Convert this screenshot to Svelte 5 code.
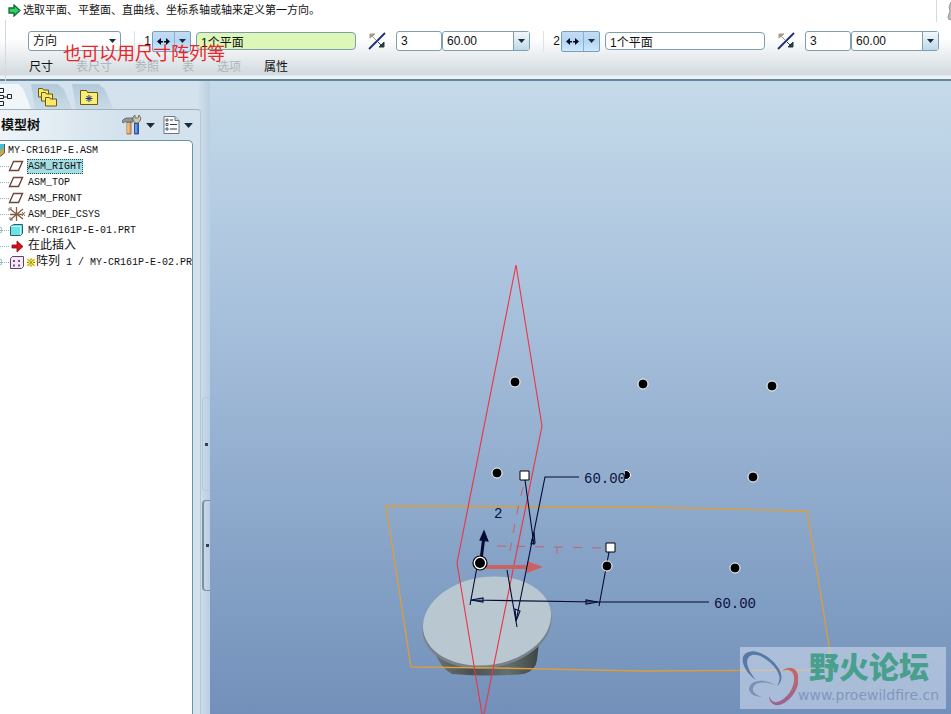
<script lang="ts">
	const groups = [
		{ no: 1, ref: '1个平面', count: '3', step: '60.00', active: true },
		{ no: 2, ref: '1个平面', count: '3', step: '60.00', active: false }
	];

	const tabs = [
		{ label: '尺寸', enabled: true },
		{ label: '表尺寸', enabled: false },
		{ label: '参照', enabled: false },
		{ label: '表', enabled: false },
		{ label: '选项', enabled: false },
		{ label: '属性', enabled: true }
	];

	const nodes = [
		{ icon: 'plane', name: 'ASM_RIGHT', selected: true },
		{ icon: 'plane', name: 'ASM_TOP' },
		{ icon: 'plane', name: 'ASM_FRONT' },
		{ icon: 'csys', name: 'ASM_DEF_CSYS' },
		{ icon: 'part', name: 'MY-CR161P-E-01.PRT' },
		{ icon: 'insert', cjk: '在此插入', name: '' },
		{ icon: 'pattern', cjk: '阵列', name: ' 1 / MY-CR161P-E-02.PRT' }
	];

	const dots = [
		[515, 382],
		[643, 384],
		[772, 386],
		[497, 473],
		[753, 477],
		[607, 566],
		[735, 568]
	];
</script>

{#snippet caret()}
	<svg class="caret" width="7" height="4" viewBox="0 0 7 4"><path d="M0 0h7L3.500 4z" /></svg>
{/snippet}

<div class="app">
	<header>
		<div class="status">
			<svg width="13" height="13" viewBox="0 0 13 13">
				<path d="M1 4h5V1l6 5.500L6 12V9H1z" fill="#2fd264" stroke="#146a35" stroke-width="1.300" />
			</svg>
			<p>选取平面、平整面、直曲线、坐标系轴或轴来定义第一方向。</p>
			<svg class="corner" width="15" height="24" viewBox="0 0 15 24">
				<path d="M.5 0v24" stroke="#d5dade" />
				<path d="M15 4l-2 5 1 4-2 6q0 3 3 3" fill="#bbb" stroke="#999" />
			</svg>
		</div>

		<div class="dash">
			<div class="controls">
				<label class="kind">
					<select aria-label="阵列类型">
						<option>方向</option>
					</select>
					{@render caret()}
				</label>
				{#each groups as g}
					<div class="group">
						<label class="no" for="ref{g.no}">{g.no}</label>
						<div class="split">
							<button aria-label="平移">
								<svg width="13" height="7" viewBox="0 0 13 7">
									<path d="M0 3.500L4 0v7zM13 3.500L9 0v7zM4 3h2v1.500H4zM7 3h2v1.500H7z" fill="#000a20" />
								</svg>
							</button>
							<button aria-label="更多">{@render caret()}</button>
						</div>
						<input id="ref{g.no}" class="ref" class:active={g.active} value={g.ref} />
						<button class="flip" aria-label="反向">
							<svg width="18" height="18" viewBox="0 0 18 18">
								<path d="M1 17L17 1" stroke="#1d2c78" stroke-width="1.800" />
								<path d="M2 2h5L2 6zM4 4l4 4" fill="#a39b84" stroke="#a39b84" />
								<path d="M16 15h-5l5-5zM13 13l-3-3" fill="#2b3a3c" stroke="#2b3a3c" />
							</svg>
						</button>
						<input class="count" aria-label="数量" value={g.count} />
						<div class="combo">
							<input aria-label="间距" value={g.step} />
							<button aria-label="间距列表">{@render caret()}</button>
						</div>
					</div>
				{/each}
			</div>
			<nav>
				{#each tabs as t}
					<button disabled={!t.enabled}>{t.label}</button>
				{/each}
			</nav>
			<p class="note">也可以用尺寸阵列等</p>
		</div>
	</header>

	<main>
		<aside>
			<div class="tabs">
				<button class="current" aria-label="模型树">
					<svg width="13" height="20" viewBox="0 0 13 20" fill="none" stroke="#222">
						<path d="M0 1.500h3.500v4H0M0 8.500h3.500v3H0M0 14.500h3.500v4H0M3 10h4M7.500 7.500h4v4h-4z" />
					</svg>
				</button>
				<button aria-label="文件夹浏览器">
					<svg width="19" height="20" viewBox="0 0 19 20" fill="#fbe96c" stroke="#6a5b14">
						<path d="M.5 1.500h4l1 1.500h5v7H.500z" />
						<path d="M3.500 5.500h4l1 1.500h6v7h-11z" />
						<path d="M7.500 10.500h4l1 1.500h6v7h-11z" />
					</svg>
				</button>
				<button aria-label="收藏夹">
					<svg width="18" height="16" viewBox="0 0 18 16">
						<path d="M.5 1.500h6l1 2h10v12H.500z" fill="#fbee74" stroke="#6a5b14" />
						<path d="M9 6v7M5.500 9.500h7M6.500 7l5 5M11.500 7l-5 5" stroke="#1a2f86" />
					</svg>
				</button>
			</div>

			<section>
				<div class="title">
					<h2>模型树</h2>
					<button aria-label="设置">
						<svg width="20" height="20" viewBox="0 0 20 20">
							<path d="M5 7h4v12H5z" fill="#e8a35c" stroke="#9a6230" stroke-width=".8" />
							<path d="M6 8v10" stroke="#fbdcb0" />
							<path d="M0 6q2-3 5-3h6v4H5Q3 6 1 8z" fill="#8f999e" stroke="#555d62" stroke-width=".8" />
							<path d="M12.500 8h4v11h-4z" fill="#2f6fd0" stroke="#1d3f86" stroke-width=".8" />
							<path d="M14 9v9" stroke="#9cc4f5" />
							<path d="M11 2l2-2v3h3l1-3 2 3-1 3-2 2h-3l-2-3z" fill="#c9c7ac" stroke="#5f5e4d" stroke-width=".8" />
						</svg>
						{@render caret()}
					</button>
					<button aria-label="显示">
						<svg width="17" height="20" viewBox="0 0 17 20">
							<path d="M1 1.500h11l4 4V18.500H1z" fill="#fafcfd" stroke="#6b7784" />
							<path d="M12 1.500v4h4" fill="#cfd8df" stroke="#6b7784" />
							<path d="M7 5h3M7 9.500h7M7 14h7" stroke="#333b45" />
							<path d="M3 4h2v2H3zM3 8.500h2v2H3zM3 13h2v2H3z" fill="none" stroke="#333b45" stroke-width=".8" />
						</svg>
						{@render caret()}
					</button>
				</div>

				<ul>
					<li class="root">
						<svg width="5" height="14" viewBox="0 0 5 14">
							<path d="M0 1h4v9l-4 3z" fill="#48bfd0" />
							<path d="M0 9l4-5v6l-4 3z" fill="#d9a53a" />
							<path d="M4.500 1v9L0 13.500" fill="none" stroke="#4b5e54" />
						</svg>
						<span>MY-CR161P-E.ASM</span>
					</li>
					{#each nodes as n}
						<li>
							<svg width="27" height="16" viewBox="0 0 27 16">
								<path d="M0 8.500h9" stroke="#8fb4bf" stroke-dasharray="1 1" />
								{#if n.icon === 'plane'}
									<path d="M13.500 3.500h9l-4 9h-9z" fill="#fff" stroke="#6e4634" stroke-width="1.400" />
								{:else if n.icon === 'csys'}
									<path d="M16.500 1v14M10 3l13 10M10 14L23 3M10 8.500h13" stroke="#86603c" stroke-width="1.300" />
									<path d="M9 5V2h3M10 11v3h3M22 6l3 4M25 6l-3 4" fill="none" stroke="#77777a" />
								{:else if n.icon === 'part'}
									<path d="M10.500 4.500l3-2h9v9l-2 2h-10z" fill="#6be3e6" stroke="#285f68" />
									<path d="M11 4.500h9.500V13" fill="none" stroke="#bff8f8" />
									<path d="M0 5.500h1.500v5H0" fill="none" stroke="#9fc9c9" />
								{:else if n.icon === 'insert'}
									<path d="M12 7h5V3l6 5.500L17 14v-4h-5z" fill="#d80f16" stroke="#7e0a0e" stroke-width=".8" />
								{:else}
									<path d="M10.500 4.500l2-2h11v10l-2 2h-11z" fill="#f5eafa" stroke="#5e3f66" />
									<path d="M13 6h2v2h-2zM18 6h2v2h-2zM13 10.500h2v2h-2zM18 10.500h2v2h-2z" fill="#7d4c8c" />
									<path d="M0 5.500h1.500v5H0" fill="none" stroke="#9fc9c9" />
								{/if}
							</svg>
							{#if n.icon === 'pattern'}
								<svg width="8" height="9" viewBox="0 0 9 9">
									<path d="M0 0h9v9H0z" fill="#fff36a" />
									<path d="M1 1l7 7M8 1L1 8M4.500 0v2M4.500 7v2M0 4.500h2M7 4.500h2" stroke="#6f6a10" />
								</svg>
							{/if}
							<span class:selected={n.selected}
								>{#if n.cjk}<b>{n.cjk}</b>{/if}{n.name}</span
							>
						</li>
					{/each}
				</ul>
			</section>

			<div class="grips">
				<button aria-label="折叠导航器"></button>
				<button class="pressed" aria-label="展开浏览器"></button>
			</div>
		</aside>

		<div class="view">
			<svg class="scene" viewBox="210 81 741 633" preserveAspectRatio="xMinYMin slice">
				<defs>
					<linearGradient id="base">
						<stop offset="0" stop-color="#6b7373" />
						<stop offset=".35" stop-color="#4b5150" />
						<stop offset=".7" stop-color="#65706e" />
						<stop offset="1" stop-color="#3d4444" />
					</linearGradient>
				</defs>

				<path d="M434 650q6 18 18 24q40 3 72 0q12-4 13-14l2-18z" fill="url(#base)" />
				<ellipse cx="487" cy="624" rx="65" ry="44" transform="rotate(-9 487 624)" fill="#77828a" />
				<ellipse cx="487" cy="621" rx="64.500" ry="44" transform="rotate(-9 487 621)" fill="#b9c7d1" />

				<path class="datum" d="M386 506l254 1 167 4 26 159-192 1-144-3-86-1z" />
				<path class="plane" d="M482 714L457 563 516 265l26 161-58 288" />

				<path class="ghost" d="M497 546l109 2M523 487l-7 30-6 34M557 547v7" />
				<path d="M486 565h41v-4l16 6-16 6v-4h-41z" fill="#cb6262" />

				<g class="dim">
					<path d="M579 477h-34L516 621M525 480l9 65M507 570l10 57" />
					<path d="M477 567l-7 38M609 552l-10 54M471 600l127 2h111" />
					<path d="M534 532l-3 12 4-1zM516 621l-1-12 5 2zM471 600l12-2v4zM598 602l-12-2v4z" />
					<path d="M481 560l3-24" stroke-width="3" />
					<path d="M484 531l4 10-8-1z" fill="#050a35" />
				</g>
				<g class="value">
					<text x="494" y="518">2</text>
					<text x="714" y="608">60.00</text>
				</g>

				<circle class="dot" cx="626" cy="475" r="4.500" />
				<path d="M583 470h42v14h-42z" fill="#92aecf" />
				<text class="value" x="584" y="483">60.00</text>

				{#each dots as [x, y]}
					<circle class="dot" cx={x} cy={y} r="5" />
				{/each}
				<circle cx="480" cy="563" r="7" fill="#fff" stroke="#000" stroke-width="1.200" />
				<circle cx="480" cy="563" r="5" />
				<path d="M520 471h9v9h-9zM606 543h9v9h-9z" fill="#fff" stroke="#000" />
			</svg>

			<div class="watermark">
				<svg width="56" height="58" viewBox="0 0 56 58">
					<defs>
						<linearGradient id="flame" x2="0" y2="1">
							<stop offset="0" stop-color="#c9695f" />
							<stop offset="1" stop-color="#9a6295" />
						</linearGradient>
					</defs>
					<path
						d="M14 31C3 24-3 10 3 5 12-3 30 8 37 20c4 7 3 13-2 17 4-7 3-11-1-17C27 10 14 3 8 7c-6 4-2 15 6 24z"
						fill="#5878a5"
					/>
					<path d="M34 37C24 29 8 30 7 40c0 5 7 8 13 8-8-3-10-6-9-9 2-7 15-7 23-2z" fill="#7990b7" />
					<path
						d="M40 22c10-8 19 0 16 13-3 14-18 25-25 20-3-2-4-5-4-8 3 7 7 7 11 5 8-4 15-14 14-24-1-7-6-8-12-6z"
						fill="url(#flame)"
					/>
				</svg>
				<div>
					<strong>野火论坛</strong>
					<a href="http://www.proewildfire.cn">www.proewildfire.cn</a>
				</div>
			</div>
		</div>
	</main>
</div>

<style>
	:global(body) {
		margin: 0;
	}

	.app {
		display: flex;
		flex-direction: column;
		min-height: 100vh;
		overflow: hidden;
		color: #111;
		font: 12px/16px 'Liberation Sans', 'Noto Sans CJK SC', sans-serif;
	}

	p,
	h2,
	ul {
		margin: 0;
		padding: 0;
	}

	button,
	input,
	select {
		box-sizing: border-box;
		margin: 0;
		padding: 0;
		border: 0;
		border-radius: 0;
		background: none;
		color: inherit;
		font: inherit;
	}

	button {
		display: flex;
		align-items: center;
		justify-content: center;
	}

	svg {
		flex: none;
	}

	.caret {
		fill: #1c2b3a;
	}

	header {
		box-sizing: border-box;
		height: 81px;
		border-bottom: 2px solid #64869c;
		background: linear-gradient(#fff 0 48%, #eef1f3 66%, #d2dadf 94%, #eef3f5 97%);
	}

	.status {
		display: flex;
		align-items: center;
		gap: 2px;
		height: 20px;
		padding-left: 8px;
		font-size: 11px;
	}

	.corner {
		margin-left: auto;
	}

	.dash {
		position: relative;
		margin-left: 5px;
		padding: 11px 0 0 22px;
		border-left: 1px solid #d3d9dd;
	}

	.controls {
		display: flex;
		align-items: center;
		height: 20px;
	}

	.kind {
		display: grid;
		flex: none;
		align-items: center;
		width: 93px;
		margin-right: 13px;
	}

	.kind select {
		grid-area: 1 / 1;
		width: 93px;
		height: 20px;
		padding-left: 4px;
		border: 1px solid #7f9db0;
		border-radius: 3px;
		background: #fff;
		appearance: none;
	}

	.kind .caret {
		grid-area: 1 / 1;
		justify-self: end;
		margin-right: 5px;
		pointer-events: none;
	}

	.group {
		display: flex;
		flex: none;
		align-items: center;
		box-sizing: border-box;
		width: 409px;
		padding-left: 8px;
		border-left: 1px solid #dde2e6;
	}

	.no {
		width: 9px;
		padding-right: 1px;
		box-sizing: border-box;
		text-align: right;
	}

	.split {
		display: flex;
		box-sizing: border-box;
		width: 39px;
		height: 21px;
		margin-right: 5px;
		border: 1px solid #7c9dba;
		border-radius: 2px;
		background: linear-gradient(#c3dcf3, #b4d6f4 50%, #cfe9fd);
	}

	.split button {
		flex: 1;
	}

	.split button + button {
		flex: 0 0 16px;
		border-left: 1px solid #8eaecb;
	}

	.group input {
		height: 18px;
		padding-left: 4px;
		border: 1px solid #7f9faf;
		border-radius: 4px;
		background: #fff;
	}

	.group .ref {
		width: 160px;
	}

	.group .active {
		background: #dcf7b8;
	}

	.flip {
		margin: 0 10px 0 12px;
	}

	.group .count {
		width: 46px;
		height: 20px;
		border-radius: 3px;
	}

	.combo {
		display: flex;
		box-sizing: border-box;
		width: 88px;
		height: 20px;
		border: 1px solid #7f9faf;
		border-radius: 3px;
		background: #fff;
	}

	.group .combo input {
		flex: 1;
		min-width: 0;
		border: 0;
	}

	.combo button {
		width: 16px;
		border-left: 1px solid #7f9faf;
		background: linear-gradient(#f3f8fb, #bed8ea);
	}

	nav {
		display: flex;
		gap: 23px;
		padding: 8px 1px 6px;
	}

	nav button:disabled {
		color: #adb6bc;
	}

	/* the remark lies over the controls and the tabs */
	.note {
		position: absolute;
		top: 22px;
		left: 57px;
		color: #e8262a;
		font-size: 18px;
		line-height: 24px;
		pointer-events: none;
	}

	main {
		display: flex;
		flex: 1;
	}

	aside {
		display: grid;
		flex: none;
		grid-template: 28px 1fr / 201px 9px;
		background: linear-gradient(90deg, #d3e2ec 0 94%, #b9cfe2);
	}

	.tabs {
		display: flex;
		grid-column: 1 / -1;
		padding-top: 3px;
	}

	.tabs button {
		box-sizing: border-box;
		width: 41px;
		padding-right: 8px;
		background: linear-gradient(#b3cadb, #c8dae6);
		clip-path: polygon(0 0, 65% 0, 80% 20%, 100% 100%, 10% 100%);
	}

	.tabs .current {
		justify-content: start;
		width: 31px;
		background: #f1f6f9;
		clip-path: polygon(0 0, 60% 0, 75% 20%, 100% 100%, 0 100%);
	}

	section {
		display: flex;
		flex-direction: column;
		box-sizing: border-box;
		min-width: 0;
		padding-right: 7px;
		border-top: 1px solid #9db2c0;
		border-right: 1px solid #b5c8d5;
		border-radius: 0 4px 0 0;
		background: linear-gradient(90deg, #eef4f8, #d3e2ec 60%);
	}

	.title {
		display: flex;
		align-items: center;
		gap: 8px;
		height: 30px;
		padding-left: 1px;
	}

	.title h2 {
		margin-right: auto;
		font-size: 13px;
		line-height: 16px;
	}

	.title button {
		gap: 4px;
	}

	.title .caret {
		width: 9px;
		height: 5px;
	}

	ul {
		flex: 1;
		overflow: hidden;
		padding-top: 1px;
		border-top: 1px solid #6795a5;
		border-right: 1px solid #6795a5;
		border-radius: 0 5px 0 0;
		background: #fff;
		list-style: none;
	}

	li {
		display: flex;
		align-items: center;
		height: 16px;
		font: 10px/14px 'Liberation Mono', 'Noto Sans CJK SC', monospace;
		white-space: pre;
	}

	.root {
		gap: 2px;
	}

	li span {
		padding: 1px 1px 0;
	}

	li b {
		font-weight: 400;
		font-size: 12px;
	}

	.selected {
		outline: 1px dotted #24545c;
		outline-offset: -1px;
		background: #a4dde2;
	}

	.grips {
		display: flex;
		flex-direction: column;
		gap: 9px;
		padding: 288px 0 122px 1px;
	}

	.grips button {
		height: 94px;
		border: 1px solid #b4c9d6;
		border-right: 0;
		border-radius: 4px 0 0 4px;
	}

	.grips .pressed {
		height: 91px;
		border: 1px solid #7b8f9f;
		border-left-width: 2px;
		border-right: 0;
	}

	.grips button::after {
		width: 3px;
		height: 3px;
		background: #34444f;
		content: '';
	}

	.view {
		position: relative;
		flex: 1;
		min-width: 0;
		background: linear-gradient(#c5dbea, #a6bfdb 38%, #829fc4 80%, #7390ba);
	}

	.scene {
		display: block;
		width: 100%;
	}

	.datum {
		fill: none;
		stroke: #dc9d3c;
		stroke-width: 1.3;
	}

	.plane {
		fill: none;
		stroke: #ee3344;
		stroke-width: 1.1;
	}

	.ghost {
		fill: none;
		stroke: #c4626f;
		stroke-dasharray: 9 10;
	}

	.dim {
		fill: none;
		stroke: #050a35;
		stroke-width: 1.1;
	}

	.value {
		fill: #0a0f3c;
		font: 14px 'Liberation Mono', monospace;
	}

	.dot {
		stroke: #fff;
	}

	.watermark {
		display: flex;
		position: absolute;
		right: 5px;
		bottom: 5px;
		align-items: center;
		box-sizing: border-box;
		width: 206px;
		height: 62px;
		padding-left: 2px;
		background: rgb(203 217 237 / 0.6);
	}

	.watermark div {
		display: flex;
		flex-direction: column;
	}

	.watermark strong {
		padding-left: 11px;
		color: #479f8c;
		font-weight: 900;
		font-size: 30px;
		line-height: 34px;
	}

	.watermark a {
		color: #8098bb;
		font: 14px/20px 'DejaVu Sans', sans-serif;
		text-decoration: none;
	}
</style>
